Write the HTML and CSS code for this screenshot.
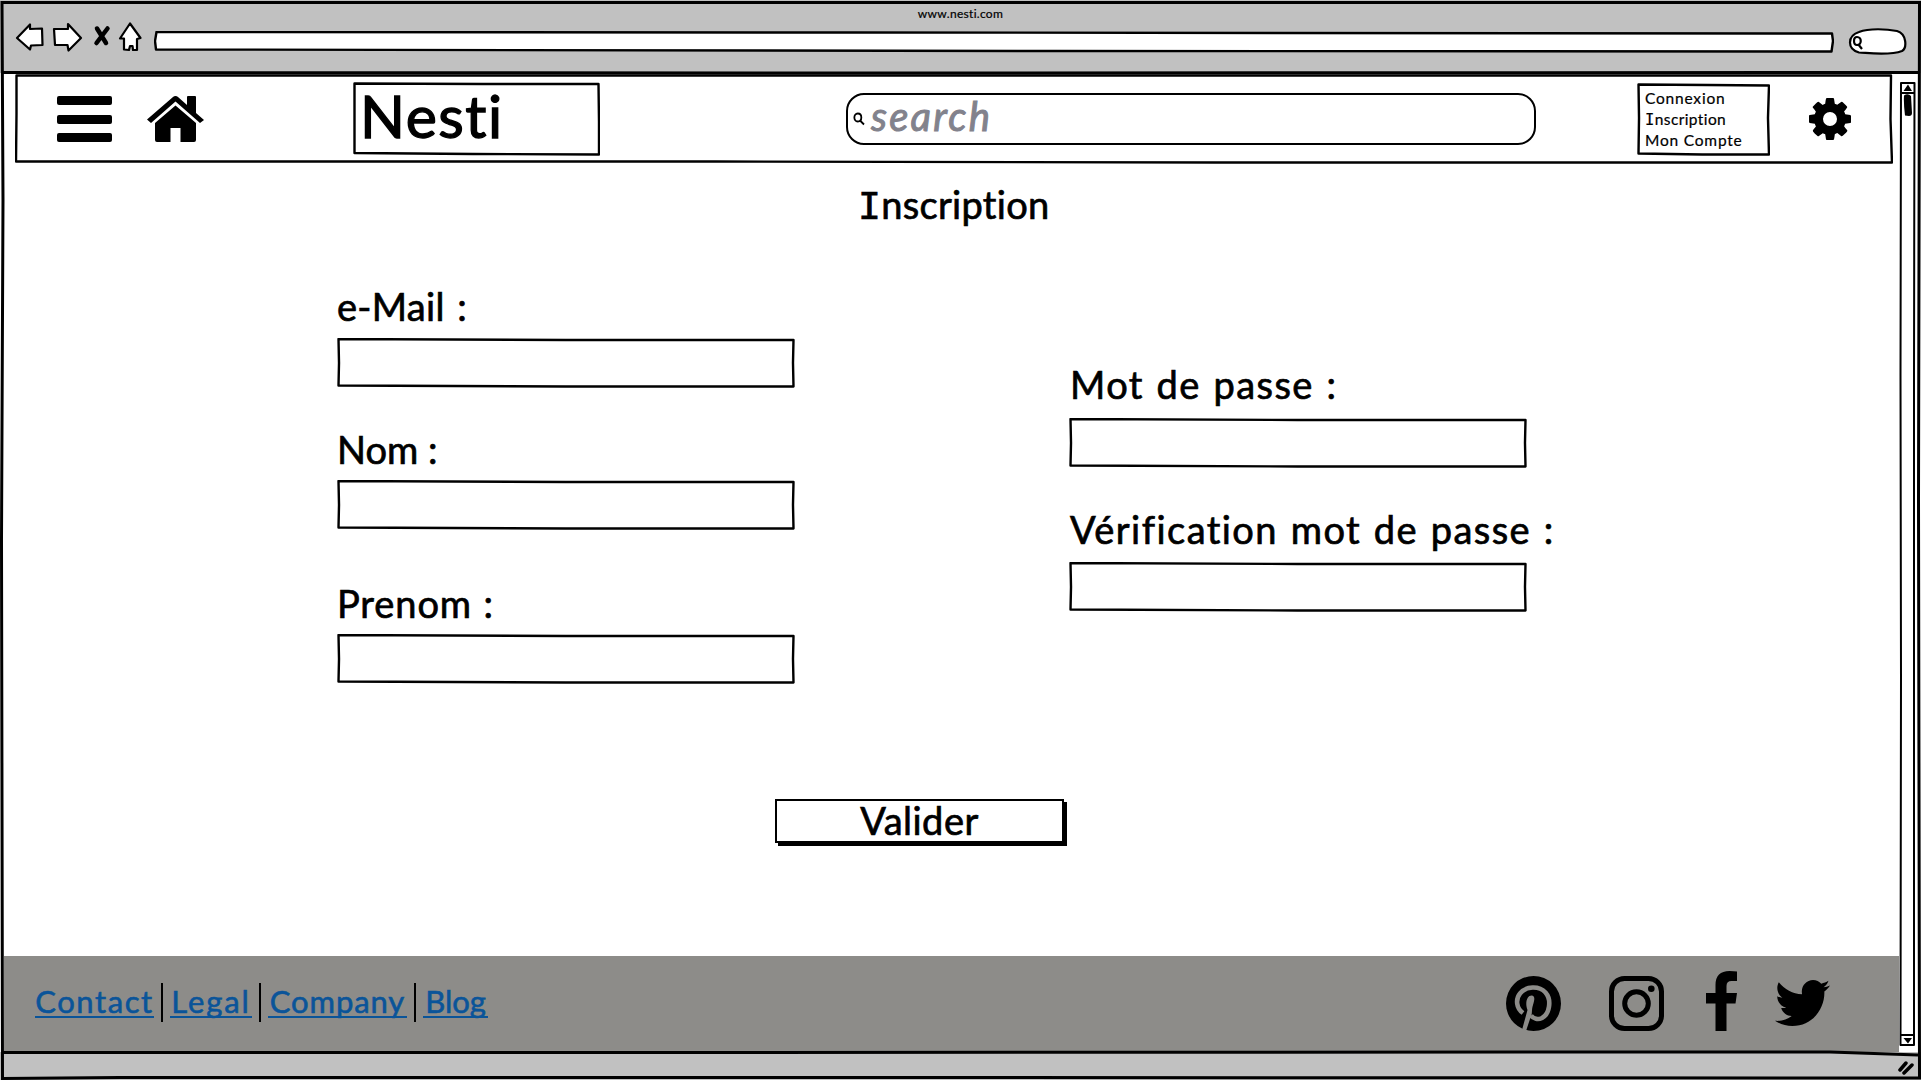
FILE: index.html
```html
<!DOCTYPE html>
<html lang="fr">
<head>
<meta charset="utf-8">
<title>Nesti - Inscription</title>
<link rel="stylesheet" href="styles.css">
</head>
<body>
<div class="window">
  <svg class="window-lines" viewBox="0 0 1921 1080" aria-hidden="true">
    <path d="M2 2.500H1919.500L1918.500 500L1919.500 1078L1000 1077.500L120 1077.500L2.500 1078.500L2 800L1.500 540L3 200Z"/>
    <path d="M3 72.500L900 73L1918 72.500M3 1052.500L500 1052.500L1830 1052L1918 1055"/>
  </svg>
  <header class="browser">
    <p class="address-title">www.nesti.com</p>
    <div class="browser-row">
      <svg class="nav-icons" viewBox="0 0 136 40" aria-hidden="true">
        <path d="M2 21L15 7.500V12L27 11.500L27.500 28L16 28.500L15 32.500Z"/>
        <path d="M39 12L53 12L53 7L66 21L53.500 33.500L52.500 28L40 28Z"/>
        <path class="cross" d="M82 11.500L91 26M92.500 11.500L81.500 26"/>
        <path d="M105 21.500L115 6.500L125.500 21L122 22L122 33L118 33L117.500 29L115 29L114 33L109 32.500L109 21.500Z"/>
      </svg>
      <div class="address"><svg class="frame" viewBox="0 0 1680 22" preserveAspectRatio="none"><path d="M2.500 1L700 1.500L1678 2.500L1679 10L1677.500 20.500L900 20L2 18.500L1 10Z"/></svg></div>
      <svg class="mini-search" viewBox="0 0 62 28" aria-hidden="true">
        <path d="M12 4C22 0 40 1 50 3C60 6 60 20 55 23C42 28 22 25 12 24.500C0 21 0 8 12 4Z"/>
        <path class="lens" d="M10 9C15 9 15 17 10 17C6 17 6 9 10 9M11 16L15 21"/>
      </svg>
    </div>
  </header>

  <div class="viewport">
    <main class="page">
      <nav class="topbar">
        <svg class="frame" viewBox="0 0 1877 90" preserveAspectRatio="none"><path d="M1.500 1.500L900 1.500L1875 1.500L1874.500 45L1876 88.500L1200 88.500L700 87.500L1 87.500L1.500 40Z"/></svg>
        <svg class="icon-menu" viewBox="0 0 55 46"><rect width="55" height="9" rx="2"/><rect y="19" width="55" height="9" rx="2"/><rect y="37" width="55" height="9" rx="2"/></svg>
        <svg class="icon-home" viewBox="0 0 57 46"><path d="M28.500 0Q30 0 31 1L40 9V1Q40 0 41 0H48Q49 0 49 1V17L57 24L53 27L28.500 5.500L4 27L0 23.500L26 1Q27 0 28.500 0Z"/><path d="M28.500 9.500L49 27V44Q49 46 47 46H33.500V32H23.500V46H10Q8 46 8 44V27Z"/></svg>
        <div class="logo"><svg class="frame" viewBox="0 0 247 74" preserveAspectRatio="none"><path d="M1.500 1.500L130 2L245.500 2L246 40L246 72.500L120 72L1.500 71L1.500 35Z"/></svg><span>Nesti</span></div>
        <div class="search"><svg viewBox="0 0 12 13"><path d="M4.800 1C9.500 1 9.500 9 4.800 9C0.200 9 0.200 1 4.800 1M7.500 8.500L11 12"/></svg><span>search</span></div>
        <div class="account"><svg class="frame" viewBox="0 0 132 73" preserveAspectRatio="none"><path d="M1.500 1.500L70 2L131 2.500L130 35L131 71.500L65 71.500L1.500 70.500L2 35Z"/></svg>
          <p>Connexion</p><p class="serif-i">Inscription</p><p>Mon Compte</p></div>
        <svg class="icon-gear" viewBox="0 0 1536 1536"><path d="M1024 768q0-106-75-181t-181-75-181 75-75 181 75 181 181 75 181-75 75-181zm512-109v222q0 12-8 23t-20 13l-185 28q-19 54-39 91 35 50 107 138 10 12 10 25t-9 23q-27 37-99 108t-94 71q-12 0-26-9l-138-108q-44 23-91 38-16 136-29 186-7 28-36 28H657q-14 0-24.500-8.500T621 1506l-28-184q-49-16-90-37l-141 107q-10 9-25 9-14 0-25-11-126-114-165-168-7-10-7-23 0-12 8-23 15-21 51-66.500t54-70.500q-27-50-41-99L29 913q-13-2-21-12.500T0 877V655q0-12 8-23t19-13l186-28q14-46 39-92-40-57-107-138-10-12-10-24 0-10 9-23 26-36 98.500-107.500T337 135q13 0 26 10l138 107q44-23 91-38 16-136 29-186 7-28 36-28h222q14 0 24.500 8.500T915 30l28 184q49 16 90 37l142-107q9-9 24-9 13 0 25 10 129 119 165 170 7 8 7 22 0 12-8 23-15 21-51 66.500t-54 70.500q26 50 41 98l183 28q13 2 21 12.500t8 23.500z"/></svg>
      </nav>

      <h1 class="serif-i">Inscription</h1>
      <form class="form">
        <div class="col left">
          <div class="field"><label class="l-mail">e-Mail :</label><div class="input"><svg class="frame" viewBox="0 0 456 50" preserveAspectRatio="none"><path d="M1.500 1L228 2L455 2L454.500 25L455 48.500L228 48.500L1.500 47.500L2 25Z"/></svg></div></div>
          <div class="field"><label class="l-nom">Nom :</label><div class="input"><svg class="frame" viewBox="0 0 456 50" preserveAspectRatio="none"><path d="M1.500 1L228 2L455 2L454.500 25L455 48.500L228 48.500L1.500 47.500L2 25Z"/></svg></div></div>
          <div class="field"><label class="l-prenom">Prenom :</label><div class="input"><svg class="frame" viewBox="0 0 456 50" preserveAspectRatio="none"><path d="M1.500 1L228 2L455 2L454.500 25L455 48.500L228 48.500L1.500 47.500L2 25Z"/></svg></div></div>
        </div>
        <div class="col right">
          <div class="field"><label>Mot de passe :</label><div class="input"><svg class="frame" viewBox="0 0 456 50" preserveAspectRatio="none"><path d="M1.500 1L228 2L455 2L454.500 25L455 48.500L228 48.500L1.500 47.500L2 25Z"/></svg></div></div>
          <div class="field"><label class="l-verif">Vérification mot de passe :</label><div class="input"><svg class="frame" viewBox="0 0 456 50" preserveAspectRatio="none"><path d="M1.500 1L228 2L455 2L454.500 25L455 48.500L228 48.500L1.500 47.500L2 25Z"/></svg></div></div>
        </div>
      </form>
      <button class="submit" type="button">Valider</button>

      <footer class="footer">
        <div class="links"><a class="a-contact">Contact</a><i></i><a class="a-legal">Legal</a><i></i><a class="a-company">Company</a><i></i><a class="a-blog">Blog</a></div>
        <div class="social">
          <svg class="pinterest" viewBox="0 0 55 55"><circle cx="27.500" cy="27.500" r="27.500"/><path class="bowl" d="M17 37C10 32 9.500 23 14 17.500C20 10 33 9.500 39.500 16.500C46 24 43.500 38 36 42C32 44 27.500 43 25 39.500"/><path class="stem" d="M16 54L21.500 34C18.500 26 21.500 19.500 25.500 19.500C29.500 20 28.500 24 27 29C25 35 27 38 24 43L20 55Z"/></svg>
          <svg class="instagram" viewBox="0 0 55 55"><rect x="2.500" y="2.500" width="50" height="50" rx="13"/><circle cx="27.500" cy="27.500" r="11.800"/><circle class="dot" cx="42.300" cy="12.800" r="3.300"/></svg>
          <svg class="facebook" viewBox="0 0 31 60"><path d="M31 .5V10H25.500Q20.500 10 20.500 15V22H31L29.500 32.500H20.500V60H9.500V32.500H0V22H9.500V14Q9.500 0 23.500 0Q28 0 31 .5Z"/></svg>
          <svg class="twitter" viewBox="0 48 512 416" preserveAspectRatio="none"><path d="M459.370 151.716c.325 4.548.325 9.097.325 13.645 0 138.720-105.583 298.558-298.558 298.558-59.452 0-114.680-17.219-161.137-47.106 8.447.974 16.568 1.299 25.340 1.299 49.055 0 94.213-16.568 130.274-44.832-46.132-.975-84.792-31.188-98.112-72.772 6.498.974 12.995 1.624 19.818 1.624 9.421 0 18.843-1.300 27.614-3.573-48.081-9.747-84.143-51.980-84.143-102.985v-1.299c13.969 7.797 30.214 12.670 47.431 13.319-28.264-18.843-46.781-51.005-46.781-87.391 0-19.492 5.197-37.360 14.294-52.954 51.655 63.675 129.300 105.258 216.365 109.807-1.624-7.797-2.599-15.918-2.599-24.040 0-57.828 46.782-104.934 104.934-104.934 30.213 0 57.502 12.670 76.670 33.137 23.715-4.548 46.456-13.320 66.599-25.340-7.798 24.366-24.366 44.833-46.132 57.827 21.117-2.273 41.584-8.122 60.426-16.243-14.292 20.791-32.161 39.308-52.628 54.253z"/></svg>
        </div>
      </footer>
    </main>
    <svg class="scrollbar" viewBox="0 0 20 976" aria-hidden="true">
      <path class="track" d="M2 9L15.500 9L15 300L15 971L1.500 971L2 600L1.500 300ZM2 19L15 19M2 961L15 961"/>
      <path d="M4.500 17L9 10.500L13 17ZM4.500 964L13 964L9 969.500ZM5 21.500Q9 19 12 22L13 39Q13 42 10 42L6 41.500Q4.500 30 5 21.500Z"/>
    </svg>
  </div>
  <div class="statusbar"><svg viewBox="0 0 20 16" aria-hidden="true"><path d="M3 11L9 4M7 14L15 6"/></svg></div>
</div>
</body>
</html>
```
FILE: styles.css
```css
* { box-sizing: border-box; }
body { margin: 0; font-family: Lato, "Open Sans", sans-serif; font-variant-ligatures: none; color: #000; }
p, h1 { margin: 0; }

.window { position: relative; width: 1921px; height: 1080px; display: flex; flex-direction: column; background: #fff; overflow: hidden; }
.window-lines { position: absolute; inset: 0; width: 1921px; height: 1080px; fill: none; stroke: #000; stroke-width: 3; pointer-events: none; z-index: 2; }
.frame { position: absolute; inset: 0; width: 100%; height: 100%; fill: #fff; stroke: #000; stroke-width: 2.400; stroke-linejoin: round; }

.browser { height: 73px; background: #c1c1c1; padding-top: 5px; }
.address-title { height: 16px; font-size: 12px; line-height: 17px; text-align: center; letter-spacing: .3px; -webkit-text-stroke: .2px #000; }
.browser-row { display: flex; align-items: flex-start; padding-left: 15px; }
.nav-icons { width: 136px; height: 40px; margin-top: -4px; fill: #fff; stroke: #000; stroke-width: 2.200; stroke-linejoin: round; }
.nav-icons .cross { stroke-width: 4.500; stroke-linecap: round; }
.address { position: relative; width: 1680px; height: 22px; margin: 10px 0 0 3px; }
.mini-search { width: 62px; height: 28px; margin: 7px 0 0 13px; fill: #fff; stroke: #000; stroke-width: 2.200; }
.mini-search .lens { fill: none; }

.viewport { height: 979px; display: flex; }
.page { width: 1899px; display: flex; flex-direction: column; padding-left: 4px; }
.scrollbar { width: 20px; height: 976px; margin-top: 1px; fill: #000; }
.track { fill: #fff; stroke: #000; stroke-width: 2; stroke-linejoin: round; }

.topbar { position: relative; width: 1878px; height: 90px; margin: 1px 0 0 11px; display: flex; align-items: center; padding-left: 42px; }
.topbar > svg:not(.frame) { position: relative; flex: none; }
.icon-menu { width: 55px; height: 46px; }
.icon-home { width: 57px; height: 46px; margin-left: 35px; }
.logo { position: relative; width: 247px; height: 74px; margin-left: 149px; margin-top: -1px; padding-left: 7px; font-size: 59px; line-height: 68px; letter-spacing: 1.500px; -webkit-text-stroke: 1.300px #000; }
.logo span, .account p { position: relative; }
.search { position: relative; width: 690px; height: 52px; margin-left: 246px; border: 2px solid #000; border-radius: 18px; display: flex; align-items: center; padding-left: 5px; color: #82828c; font-size: 40px; font-style: italic; letter-spacing: 2.200px; -webkit-text-stroke: 1px #82828c; }
.search span { line-height: 47px; height: 52px; }
.search svg { width: 12px; height: 14px; margin-right: 6px; fill: none; stroke: #000; stroke-width: 1.800; }
.account { position: relative; width: 133px; height: 73px; margin-left: 101px; margin-top: 1px; padding: 5px 0 0 8px; font-size: 15.500px; line-height: 20.500px; letter-spacing: .8px; -webkit-text-stroke: .2px #000; }
.account .serif-i { letter-spacing: .4px; }
.icon-gear { width: 42px; height: 42px; margin-left: 39px; }
.serif-i::first-letter { font-family: "DejaVu Sans Mono"; }

h1 { height: 60px; margin-top: 13px; padding-left: 854px; font-size: 38px; font-weight: 400; line-height: 54px; letter-spacing: .3px; -webkit-text-stroke: .7px #000; }
.form { height: 561px; display: flex; }
.col { width: 732px; display: flex; flex-direction: column; }
.left { margin-left: 333px; padding-top: 47px; gap: 38px; }
.left .field:nth-child(3) { margin-top: 12px; }
.right { padding-top: 127px; gap: 40px; }
.field { display: flex; flex-direction: column; }
label { height: 54px; font-size: 38px; line-height: 46px; white-space: nowrap; -webkit-text-stroke: .7px #000; }
.l-mail { line-height: 45px; letter-spacing: .3px; word-spacing: 2.500px; }
.l-prenom { letter-spacing: .9px; word-spacing: 1px; }
.right label { line-height: 41px; padding-left: 1px; letter-spacing: 1.450px; word-spacing: 1.500px; }
.right .l-verif { line-height: 43px; }
.input { position: relative; width: 457.500px; height: 50px; }
.submit { width: 289px; height: 44px; margin: 1px 0 0 771px; flex: none; padding: 0 0 2px; border: 2px solid #000; box-shadow: 3px 3px 0 #000; background: #fff; color: #000; font: 38px/34px Lato, sans-serif; letter-spacing: .5px; -webkit-text-stroke: .7px #000; }

.footer { width: 1895px; height: 96px; margin-top: auto; background: #8d8c89; display: flex; justify-content: space-between; padding: 0 69px 0 31px; }
.links { display: flex; align-items: flex-start; padding-top: 27px; }
.links a { height: 35px; border-bottom: 2px solid #0a5499; color: #0a5499; font-size: 31px; line-height: 37px; white-space: nowrap; -webkit-text-stroke: .6px #0a5499; text-align: center; }
.links i { width: 2px; height: 39px; background: #000; margin: 0 7px; }
.links .a-contact { width: 119px; letter-spacing: 1.600px; }
.links .a-legal { width: 82px; letter-spacing: 1.900px; }
.links .a-company { width: 139px; letter-spacing: .9px; }
.links .a-blog { width: 65px; }
.social { display: flex; align-items: flex-start; }
.pinterest { width: 55px; height: 55px; margin-top: 20px; }
.pinterest .bowl { fill: none; stroke: #8d8c89; stroke-width: 4.600; }
.pinterest .stem { fill: #8d8c89; }
.instagram { width: 55px; height: 55px; margin: 20px 0 0 48px; fill: none; stroke: #000; stroke-width: 5; }
.instagram .dot { fill: #000; stroke: none; }
.facebook { width: 31px; height: 60px; margin: 15px 0 0 42px; }
.twitter { width: 55px; height: 46px; margin: 24px 0 0 38px; }

.statusbar { height: 28px; background: #c1c1c1; display: flex; justify-content: flex-end; padding: 7px 4px 0 0; }
.statusbar svg { width: 20px; height: 16px; fill: none; stroke: #000; stroke-width: 3.500; stroke-linecap: round; }
```
